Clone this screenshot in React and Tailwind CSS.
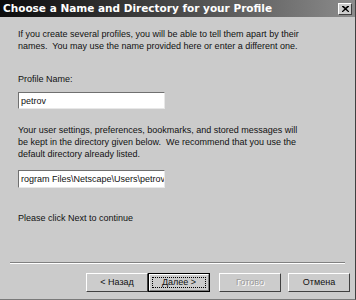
import React from "react";

const sans = { fontFamily: '"Liberation Sans", Arial, sans-serif' };

function Button({ children, isDefault, disabled }) {
  if (isDefault) {
    return (
      <div className="w-[62px] h-[19px] border border-black bg-[#cccccc]">
        <div className="h-full border-t border-l border-white border-r border-b border-r-[#808080] border-b-[#808080] p-[2px]">
          <div className="h-full border border-dotted border-black flex items-center justify-center text-[9px] text-[#111]">
            {children}
          </div>
        </div>
      </div>
    );
  }
  return (
    <div className="w-[62px] h-[19px] bg-[#cccccc] border-t border-l border-white border-r border-b border-r-[#404040] border-b-[#404040] flex items-center justify-center">
      <span
        className={
          disabled
            ? "text-[9px] text-[#9a9a9a] [text-shadow:1px_1px_0_#ffffff]"
            : "text-[9px] text-[#111]"
        }
      >
        {children}
      </span>
    </div>
  );
}

function Field({ value, tall }) {
  return (
    <div
      className={`w-[147px] ${tall ? "h-[18px]" : "h-[17px]"} bg-white border-t border-l border-[#707070] border-r border-b border-r-[#e8e8e8] border-b-[#e8e8e8] overflow-hidden flex items-center pl-[2px]`}
    >
      <span className="text-[9px] text-[#111] whitespace-nowrap">{value}</span>
    </div>
  );
}

export default function App() {
  return (
    <div
      className="w-[356px] h-[300px] bg-[#cbcbcb] flex flex-col border-r border-b border-r-[#404040] border-b-[#7a7a7a] overflow-hidden"
      style={sans}
    >
      <div className="h-[17px] shrink-0 bg-gradient-to-r from-[#0c0c0c] via-[#4a4a4a] to-[#8c8c8c] flex items-center justify-between pl-[3px] pr-[3px]">
        <span
          className="text-white font-bold text-[10.5px] whitespace-nowrap"
          style={{ fontFamily: '"DejaVu Sans", Verdana, sans-serif' }}
        >
          Choose a Name and Directory for your Profile
        </span>
        <div className="w-[14px] h-[12px] bg-[#cccccc] border-t border-l border-white border-r border-b border-r-[#404040] border-b-[#404040] flex items-center justify-center">
          <svg width="7" height="6" viewBox="0 0 7 6">
            <path d="M0 0L7 6M7 0L0 6M1 0L7 6M6 0L0 6" stroke="#000" strokeWidth="1.2" />
          </svg>
        </div>
      </div>

      <div className="flex flex-col pl-[18px] text-[9px] leading-[12px] text-[#111]">
        <p className="mt-[11px]">
          If you create several profiles, you will be able to tell them apart by their
          <br />
          names.&nbsp; You may use the name provided here or enter a different one.
        </p>
        <p className="mt-[21px]">Profile Name:</p>
        <div className="mt-[7px]">
          <Field value="petrov" />
        </div>
        <p className="mt-[15px]">
          Your user settings, preferences, bookmarks, and stored messages will
          <br />
          be kept in the directory given below.&nbsp; We recommend that you use the
          <br />
          default directory already listed.
        </p>
        <div className="mt-[10px]">
          <Field tall value={"rogram Files\\Netscape\\Users\\petrov"} />
        </div>
        <p className="mt-[24px]">Please click Next to continue</p>
      </div>

      <div className="mt-[38px] mx-[10px] border-t border-[#808080] border-b border-b-white" />

      <div className="flex mt-[9px] pl-[86px]">
        <Button>&lt; Назад</Button>
        <Button isDefault>Далее &gt;</Button>
        <div className="w-[9px]" />
        <Button disabled>Готово</Button>
        <div className="w-[7px]" />
        <Button>Отмена</Button>
      </div>
    </div>
  );
}
